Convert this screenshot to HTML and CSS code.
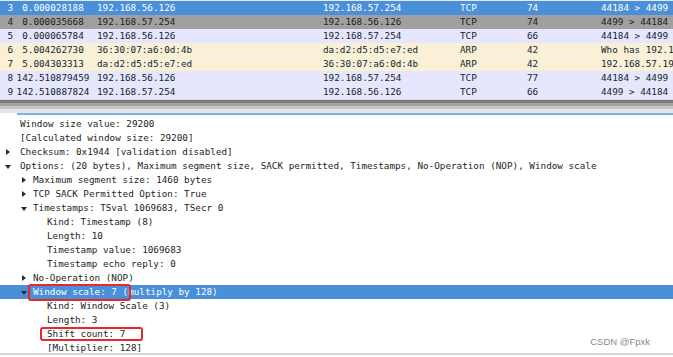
FILE: index.html
```html
<!DOCTYPE html>
<html lang="en">
<head>
    <meta charset="UTF-8">
    <title>Wireshark - TCP options</title>
    <link rel="stylesheet" href="styles.css">
</head>
<body>
    <div class="packet-list">
        <div class="row selected">
            <span class="no">3</span><span class="time">0.000028188</span><span class="src">192.168.56.126</span><span class="dst">192.168.57.254</span><span class="proto">TCP</span><span class="len">74</span><span class="info">44184 &gt; 4499 [SYN] Seq=0 Win=29200 Len=0 MSS=1460</span>
        </div>
        <div class="row marked">
            <span class="no">4</span><span class="time">0.000035668</span><span class="src">192.168.57.254</span><span class="dst">192.168.56.126</span><span class="proto">TCP</span><span class="len">74</span><span class="info">4499 &gt; 44184 [SYN, ACK] Seq=0 Ack=1</span>
        </div>
        <div class="row tcp">
            <span class="no">5</span><span class="time">0.000065784</span><span class="src">192.168.56.126</span><span class="dst">192.168.57.254</span><span class="proto">TCP</span><span class="len">66</span><span class="info">44184 &gt; 4499 [ACK] Seq=1 Ack=1</span>
        </div>
        <div class="row arp">
            <span class="no">6</span><span class="time">5.004262730</span><span class="src">36:30:07:a6:0d:4b</span><span class="dst">da:d2:d5:d5:e7:ed</span><span class="proto">ARP</span><span class="len">42</span><span class="info">Who has 192.168.57.194? Tell 192.168.56.1</span>
        </div>
        <div class="row arp">
            <span class="no">7</span><span class="time">5.004303313</span><span class="src">da:d2:d5:d5:e7:ed</span><span class="dst">36:30:07:a6:0d:4b</span><span class="proto">ARP</span><span class="len">42</span><span class="info">192.168.57.194 is at da:d2:d5:d5:e7:ed</span>
        </div>
        <div class="row tcp">
            <span class="no">8</span><span class="time">142.510879459</span><span class="src">192.168.56.126</span><span class="dst">192.168.57.254</span><span class="proto">TCP</span><span class="len">77</span><span class="info">44184 &gt; 4499 [PSH, ACK] Seq=1 Ack=1</span>
        </div>
        <div class="row tcp">
            <span class="no">9</span><span class="time">142.510887824</span><span class="src">192.168.57.254</span><span class="dst">192.168.56.126</span><span class="proto">TCP</span><span class="len">66</span><span class="info">4499 &gt; 44184 [ACK] Seq=1 Ack=12</span>
        </div>
    </div>

    <div class="splitter"></div>

    <div class="details">
        <div class="node l1"><span class="tw"></span>Window size value: 29200</div>
        <div class="node l1"><span class="tw"></span>[Calculated window size: 29200]</div>
        <div class="node l1"><span class="tw closed"></span>Checksum: 0x1944 [validation disabled]</div>
        <div class="node l1"><span class="tw open"></span>Options: (20 bytes), Maximum segment size, SACK permitted, Timestamps, No-Operation (NOP), Window scale</div>
        <div class="node l2"><span class="tw closed"></span>Maximum segment size: 1460 bytes</div>
        <div class="node l2"><span class="tw closed"></span>TCP SACK Permitted Option: True</div>
        <div class="node l2"><span class="tw open"></span>Timestamps: TSval 1069683, TSecr 0</div>
        <div class="node l3">Kind: Timestamp (8)</div>
        <div class="node l3">Length: 10</div>
        <div class="node l3">Timestamp value: 1069683</div>
        <div class="node l3">Timestamp echo reply: 0</div>
        <div class="node l2"><span class="tw closed"></span>No-Operation (NOP)</div>
        <div class="node l2 active"><span class="tw open"></span>Window scale: 7 (multiply by 128)<span class="mark mark-scale"></span></div>
        <div class="node l3">Kind: Window Scale (3)</div>
        <div class="node l3">Length: 3</div>
        <div class="node l3">Shift count: 7<span class="mark mark-shift"></span></div>
        <div class="node l3">[Multiplier: 128]</div>
        <div class="watermark">CSDN @Fpxk</div>
    </div>
</body>
</html>
```

FILE: styles.css
```css
body {
    margin: 0;
    padding: 0;
    background: white;
    font-family: 'DejaVu Sans Mono', monospace;
    font-size: 9.3px;
    color: #12272e;
    overflow: hidden;
    height: 357px;
}

/* packet list */

.packet-list {
    border-top: 1px solid #e8e8f4;
}

.row {
    display: grid;
    grid-template-columns: 13px 80px 230px 137px 67px 74px 1fr;
    height: 14px;
    line-height: 14px;
    white-space: nowrap;
    overflow: hidden;
}

.row span {
    overflow: hidden;
}

.row .no {
    text-align: right;
}

.row .time {
    text-align: center;
}

.row .src {
    padding-left: 4px;
}

.row.selected {
    background: #4a90d9;
    color: white;
}

.row.marked {
    background: #a0a0a0;
    color: #1c1c1c;
}

.row.tcp {
    background: #e7e6ff;
}

.row.arp {
    background: #faf0d7;
}

.splitter {
    height: 14px;
    background: linear-gradient(to bottom,
        #dcdcdc 0, #dcdcdc 1px,
        #7a7a7a 1px, #7a7a7a 4px,
        #a2a2a2 4px, #a2a2a2 7px,
        #c6c6c6 7px, #c6c6c6 10px,
        #e6e6e6 10px, #e6e6e6 14px);
}

/* packet details */

.details {
    position: relative;
    height: 242px;
    padding-top: 4px;
    box-sizing: border-box;
    border-bottom: 2px solid #d6d6d6;
    background: linear-gradient(#7fb2ea, #7fb2ea) no-repeat 17px 0 / calc(100% - 17px) 2px;
}

.node {
    position: relative;
    height: 14px;
    line-height: 14px;
    white-space: nowrap;
    color: #1e1e1e;
}

.node.l1 {
    padding-left: 5px;
}

.node.l1 .tw {
    width: 15px;
}

.node.l2 {
    padding-left: 21px;
}

.node.l2 .tw {
    width: 12px;
}

.node.l3 {
    padding-left: 47px;
}

.tw {
    display: inline-block;
    height: 14px;
    vertical-align: top;
    position: relative;
}

.tw.closed::before {
    content: "";
    position: absolute;
    left: 1px;
    top: 4px;
    border-left: 4px solid #2a2a2a;
    border-top: 3.5px solid transparent;
    border-bottom: 3.5px solid transparent;
}

.tw.open::before {
    content: "";
    position: absolute;
    left: 0;
    top: 6px;
    border-top: 4px solid #2a2a2a;
    border-left: 3.5px solid transparent;
    border-right: 3.5px solid transparent;
}

.node.active {
    background: #4a90d9;
    color: white;
}

.mark {
    position: absolute;
    border: 2px solid #e8262b;
    border-radius: 3px;
    box-sizing: border-box;
}

.mark-scale {
    left: 28px;
    top: -1px;
    width: 103px;
    height: 17px;
}

.mark-shift {
    left: 40px;
    top: 0;
    width: 103px;
    height: 14px;
}

.watermark {
    position: absolute;
    right: 23px;
    bottom: 6px;
    font-family: 'Liberation Sans', Arial, sans-serif;
    font-size: 9.5px;
    color: #8a8a8a;
}
```
